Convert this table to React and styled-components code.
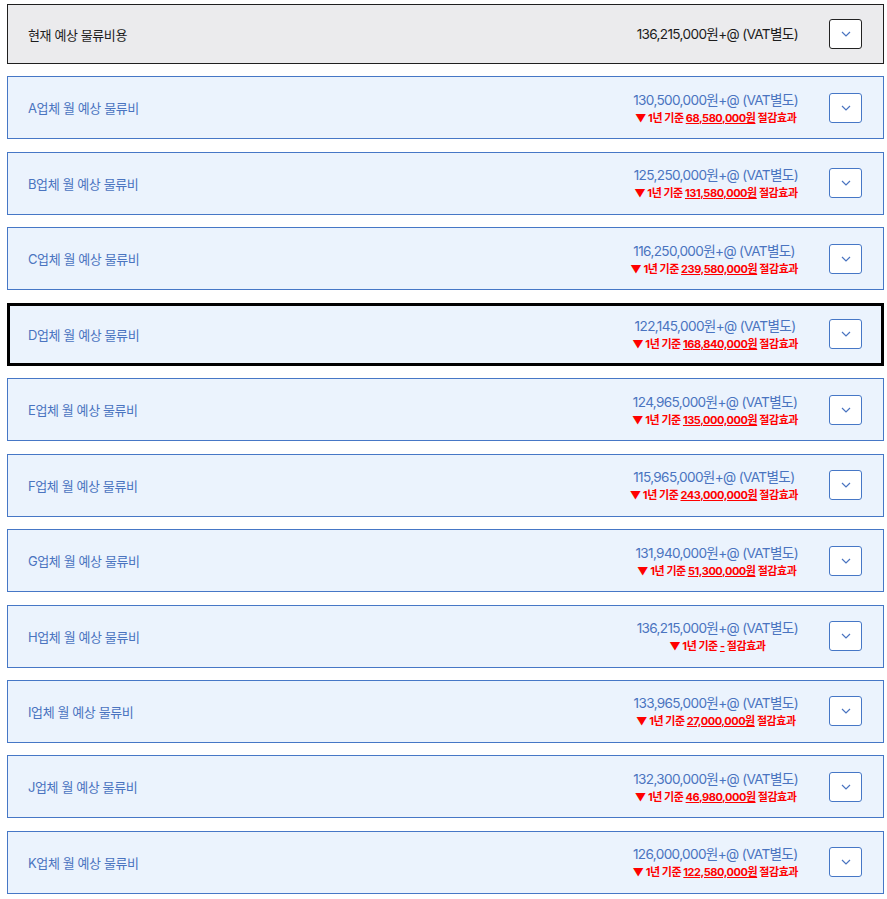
import styled, { createGlobalStyle } from 'styled-components';

const GlobalStyle = createGlobalStyle`
    body {
        margin: 0;
        background: #ffffff;
        font-family: Inter, "Noto Sans CJK KR", sans-serif;
    }
`;

const List = styled.div`
    display: flex;
    flex-direction: column;
    gap: 12.45px;
    width: 877px;
    padding: 4px 0 0 7px;
`;

const Row = styled.div`
    display: flex;
    align-items: center;
    box-sizing: border-box;
    height: ${(p) => (p.$current ? '60px' : '63px')};
    padding: 0 21px 0 20px;
    border: 1px solid ${(p) => (p.$current ? '#1f1f1f' : '#4677c6')};
    background-color: ${(p) => (p.$current ? '#ebebed' : '#ebf3fd')};
    outline: ${(p) => (p.$selected ? '3px solid #000' : 'none')};
    outline-offset: -3px;
`;

const Label = styled.span`
    flex: 1;
    font-size: 13px;
    letter-spacing: -0.4px;
    color: ${(p) => (p.$current ? '#1c1c1c' : '#4a74c0')};
`;

const PriceBox = styled.div`
    display: flex;
    flex-direction: column;
    align-items: center;
    margin-right: 31px;
    padding-top: ${(p) => (p.$current ? '0' : '1px')};
`;

const Price = styled.span`
    font-size: 13.6px;
    letter-spacing: -0.65px;
    line-height: 19px;
    color: ${(p) => (p.$current ? '#1c1c1c' : '#4a74c0')};
`;

const Saving = styled.span`
    font-size: 11px;
    font-weight: 700;
    letter-spacing: -0.45px;
    line-height: 16px;
    color: #ff0000;

    u {
        text-underline-offset: 1px;
    }
`;

const ToggleButton = styled.button`
    display: flex;
    align-items: center;
    justify-content: center;
    width: 33px;
    height: 30px;
    padding: 0;
    border: 1px solid ${(p) => (p.$current ? '#222' : '#4677c6')};
    border-radius: 3px;
    background: #ffffff;
    cursor: pointer;
`;

const Chevron = () => (
    <svg width="10" height="6" viewBox="0 0 10 6" fill="none">
        <path d="M1 1l4 4 4-4" stroke="#4a74c0" strokeWidth="1.2" />
    </svg>
);

const vendors = [
    { name: 'A', price: '130,500,000', save: '68,580,000원' },
    { name: 'B', price: '125,250,000', save: '131,580,000원' },
    { name: 'C', price: '116,250,000', save: '239,580,000원' },
    { name: 'D', price: '122,145,000', save: '168,840,000원', selected: true },
    { name: 'E', price: '124,965,000', save: '135,000,000원' },
    { name: 'F', price: '115,965,000', save: '243,000,000원' },
    { name: 'G', price: '131,940,000', save: '51,300,000원' },
    { name: 'H', price: '136,215,000', save: '-' },
    { name: 'I', price: '133,965,000', save: '27,000,000원' },
    { name: 'J', price: '132,300,000', save: '46,980,000원' },
    { name: 'K', price: '126,000,000', save: '122,580,000원' },
];

const App = () => {
    return (
        <>
            <GlobalStyle />
            <List>
                <Row $current>
                    <Label $current>현재 예상 물류비용</Label>
                    <PriceBox $current>
                        <Price $current>136,215,000원+@ (VAT별도)</Price>
                    </PriceBox>
                    <ToggleButton $current>
                        <Chevron />
                    </ToggleButton>
                </Row>
                {vendors.map((v) => (
                    <Row key={v.name} $selected={v.selected}>
                        <Label>{v.name}업체 월 예상 물류비</Label>
                        <PriceBox>
                            <Price>{v.price}원+@ (VAT별도)</Price>
                            <Saving>
                                ▼ 1년 기준 <u>{v.save}</u> 절감효과
                            </Saving>
                        </PriceBox>
                        <ToggleButton>
                            <Chevron />
                        </ToggleButton>
                    </Row>
                ))}
            </List>
        </>
    );
};

export default App;
